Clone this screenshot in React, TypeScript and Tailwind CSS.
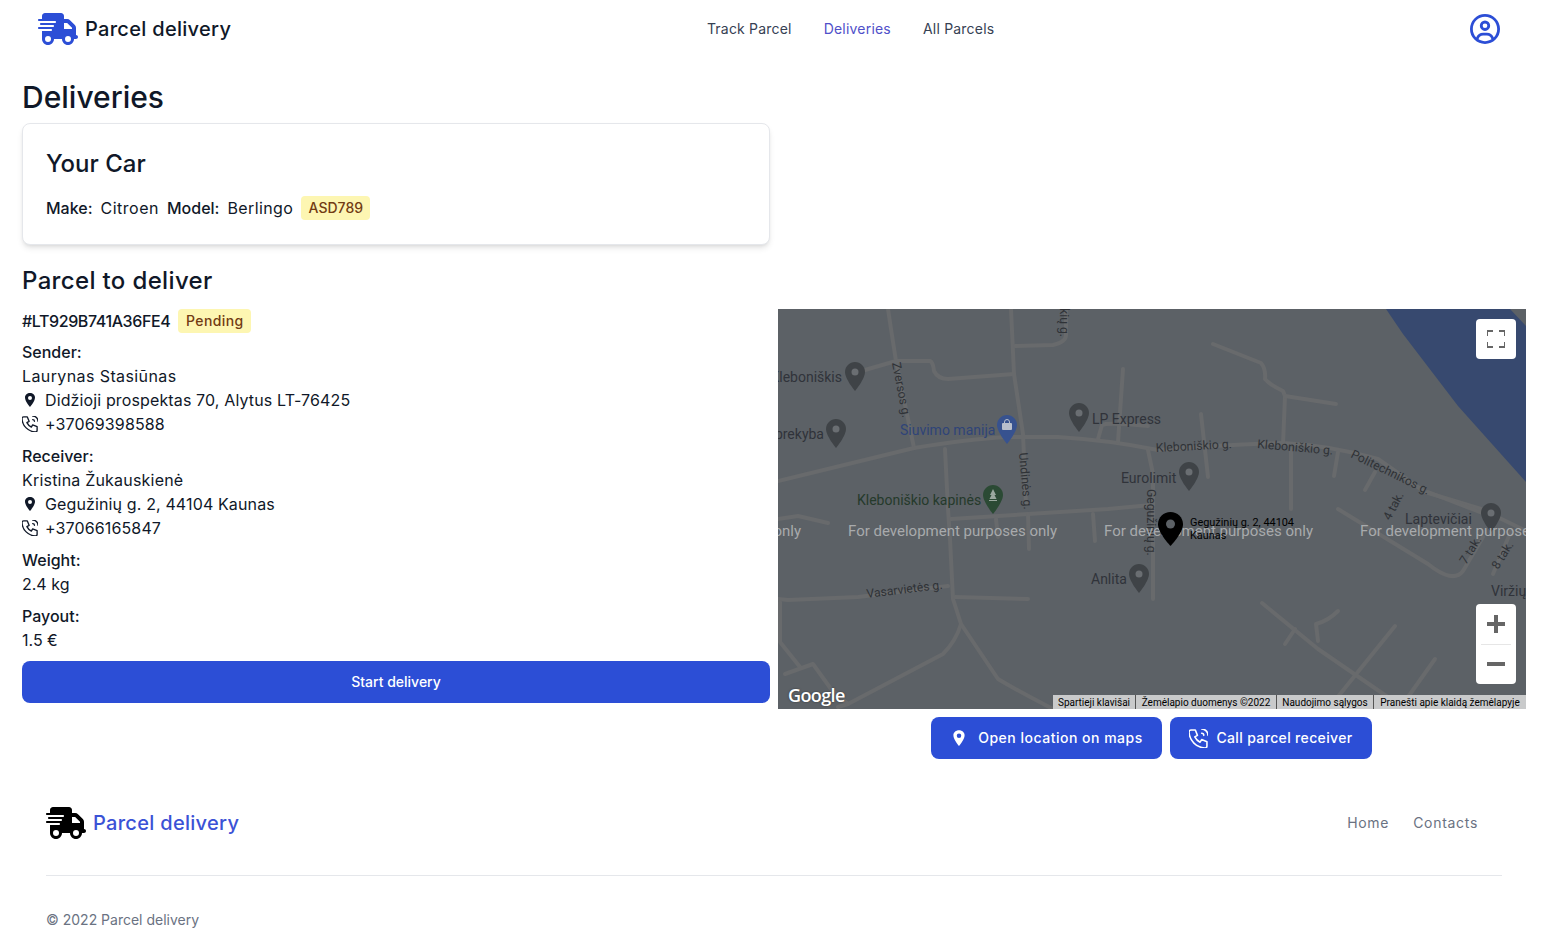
import { FaTruckFast, FaRegCircleUser } from "react-icons/fa6";
import { IoLocationSharp } from "react-icons/io5";

const roads = [
  "M110 0 L113 20 L118 52 L136 139",
  "M80 63 L118 52 L152 52 Q155 53 156 62 Q160 70 170 70 L236 65",
  "M233 0 L236 65 L245 125 L248 195",
  "M237 37 L275 36 Q288 33 288 26 L288 0",
  "M0 172 L136 139 Q190 130 230 128 L280 128 Q330 131 380 141 Q440 136 505 134 Q550 136 600 150 L647 183 L703 200 L748 222",
  "M167 140 L170 200 L172 230 L175 290 L183 315 Q178 332 165 345 L70 395 L60 398",
  "M183 315 L220 370 Q240 382 275 400",
  "M345 60 L340 133",
  "M320 130 L324 116 Q330 113 370 117",
  "M370 141 L375 165 L375 290",
  "M435 35 L483 54 Q488 60 487 70 Q492 76 505 82 L507 87 L505 135",
  "M507 87 L558 95",
  "M423 105 L430 168",
  "M513 140 L513 200",
  "M560 143 L556 167",
  "M597 163 L587 181",
  "M0 210 L20 207 L50 214",
  "M173 210 L330 200 L373 196",
  "M218 210 L220 228",
  "M250 205 L251 240",
  "M315 205 L317 232",
  "M0 290 L10 291 L80 288 L170 277",
  "M177 288 L250 290",
  "M2 293 L2 333 L22 358",
  "M7 365 L35 355 L53 380 L70 395",
  "M484 294 L540 340 L617 393 L625 400",
  "M517 320 L507 335",
  "M540 332 L538 315 Q550 312 560 302",
  "M617 317 L550 400",
  "M657 350 L625 395",
  "M560 200 L650 255 Q675 275 685 262 L705 228",
  "M733 222 L715 265",
  "M650 183 L720 210",
];

const pins = [
  { x: 77, y: 53, fill: "#3f4347" },
  { x: 58, y: 110, fill: "#3f4347" },
  { x: 229, y: 106, fill: "#37528f" },
  { x: 301, y: 94, fill: "#3f4347" },
  { x: 215, y: 176, fill: "#2b4a34" },
  { x: 411, y: 153, fill: "#3f4347" },
  { x: 361, y: 255, fill: "#3f4347" },
  { x: 713, y: 194, fill: "#3f4347" },
];

const places = [
  { text: "Kleboniškis", x: 64, y: 73, anchor: "end", fill: "#30333a" },
  { text: "Parduotuvė prekyba", x: 46, y: 130, anchor: "end", fill: "#30333a" },
  { text: "Siuvimo manija", x: 122, y: 126, anchor: "start", fill: "#2f4478" },
  { text: "LP Express", x: 314, y: 115, anchor: "start", fill: "#30333a" },
  { text: "Kleboniškio kapinės", x: 79, y: 196, anchor: "start", fill: "#253a2b" },
  { text: "Eurolimit", x: 343, y: 174, anchor: "start", fill: "#30333a" },
  { text: "Anlita", x: 313, y: 275, anchor: "start", fill: "#30333a" },
  { text: "Laptevičiai", x: 627, y: 215, anchor: "start", fill: "#30333a" },
  { text: "Viržių", x: 713, y: 287, anchor: "start", fill: "#30333a" },
];

const streets = [
  { text: "Zversos g.", x: 114, y: 54, r: 79 },
  { text: "kių g.", x: 282, y: -1, r: 90 },
  { text: "Undinės g.", x: 241, y: 144, r: 85 },
  { text: "Gegužinių g.", x: 369, y: 180, r: 90 },
  { text: "Kleboniškio g.", x: 378, y: 143, r: -3 },
  { text: "Kleboniškio g.", x: 479, y: 139, r: 5 },
  { text: "Politechnikos g.", x: 572, y: 148, r: 26 },
  { text: "Vasarvietės g.", x: 89, y: 289, r: -7 },
  { text: "4 tak.", x: 612, y: 212, r: -62 },
  { text: "7 tak.", x: 688, y: 256, r: -58 },
  { text: "8 tak.", x: 720, y: 261, r: -58 },
];

function PhoneIcon({ className }: { className: string }) {
  return (
    <svg viewBox="3 3 18 18" fill="none" stroke="currentColor" strokeWidth="1.5" strokeLinecap="round" strokeLinejoin="round" className={className}>
      <path d="M5 4h4l2 5l-2.500 1.500a11 11 0 0 0 5 5l1.500 -2.500l5 2v4a2 2 0 0 1 -2 2a16 16 0 0 1 -15 -15a2 2 0 0 1 2 -2" />
      <path d="M15 7a2 2 0 0 1 2 2" />
      <path d="M15 3a6 6 0 0 1 6 6" />
    </svg>
  );
}

function MapDrawing() {
  return (
    <svg viewBox="0 0 748 400" className="block w-full h-full font-['Roboto',sans-serif]">
      <rect width="748" height="400" fill="#5c6166" />
      <path d="M608 0 L625 25 L680 97 L748 173 L748 17 L732 0 Z" fill="#37496f" />
      <g fill="none" stroke="#686a6c" strokeWidth="4" strokeLinecap="round" strokeLinejoin="round">
        {roads.map((d) => (
          <path key={d} d={d} />
        ))}
      </g>
      {streets.map((s) => (
        <text
          key={s.text + s.x}
          x={s.x}
          y={s.y}
          transform={`rotate(${s.r} ${s.x} ${s.y})`}
          fontSize="12.2"
          fill="#2f3236"
        >
          {s.text}
        </text>
      ))}
      {places.map((p) => (
        <text key={p.text} x={p.x} y={p.y} textAnchor={p.anchor as "start" | "end"} fontSize="14" fill={p.fill}>
          {p.text}
        </text>
      ))}
      {pins.map((p) => (
        <g key={p.x} transform={`translate(${p.x - 10} ${p.y})`}>
          <path d="M10 0C4.500 0 0 4.500 0 10c0 7 10 19 10 19s10-12 10-19C20 4.500 15.500 0 10 0z" fill={p.fill} />
          {p.fill === "#3f4347" && <circle cx="10" cy="10" r="3.500" fill="#6a6e72" />}
          {/* shop bag */}
          {p.fill === "#37528f" && (
            <g>
              <rect x="5" y="8" width="10" height="7" rx="1" fill="#b9bfcc" />
              <path d="M7.500 8V7a2.500 2.500 0 0 1 5 0v1" fill="none" stroke="#b9bfcc" strokeWidth="1" />
            </g>
          )}
          {/* cemetery tree */}
          {p.fill === "#2b4a34" && <path d="M10 4L13 10H11.500L13.500 14H6.500L8.500 10H7zM6 15h8v1H6z" fill="#9aa89e" />}
        </g>
      ))}
      {[-186, 70, 326, 582].map((x) => (
        <text key={x} x={x} y="227" fontSize="15" fill="#a8aaac">
          For development purposes only
        </text>
      ))}
      <g transform="translate(380 203)">
        <path d="M12.500 0C5.600 0 0 5.400 0 12.300c0 9 12.500 21.700 12.500 21.700S25 21.300 25 12.300C25 5.400 19.400 0 12.500 0z" fill="#000" />
        <circle cx="12.500" cy="12" r="4.500" fill="#5c6166" />
      </g>
      <text x="412" y="217" fontSize="10.900" fill="#000">Gegužinių g. 2, 44104</text>
      <text x="412" y="230" fontSize="10.900" fill="#000">Kaunas</text>
    </svg>
  );
}

function ContactLine({ icon, text }: { icon: "pin" | "phone"; text: string }) {
  return (
    <div className="flex items-center h-6 gap-[7px]">
      <span className="w-4 flex justify-center">
        {icon === "pin" ? <IoLocationSharp size={16} /> : <PhoneIcon className="w-4 h-4" />}
      </span>
      <span>{text}</span>
    </div>
  );
}

function Logo({ iconClass, textClass }: { iconClass: string; textClass: string }) {
  return (
    <div className="flex items-center gap-[7px]">
      <FaTruckFast size={40} className={iconClass} />
      <span className={`text-xl font-medium tracking-[0.3px] ${textClass}`}>Parcel delivery</span>
    </div>
  );
}

export default function App() {
  return (
    <div className="h-screen overflow-hidden bg-white text-gray-900 font-['Inter',sans-serif]">
      {/* Header */}
      <header className="h-[58px] flex items-center justify-between pl-[38px] pr-[44px]">
        <Logo iconClass="text-[#2c4ed6]" textClass="text-gray-900" />
        <nav className="flex gap-8 text-sm tracking-[0.2px] text-gray-700">
          <a>Track Parcel</a>
          <a className="text-[#4f50c9]">Deliveries</a>
          <a>All Parcels</a>
        </nav>
        <FaRegCircleUser size={30} className="text-[#2c4ed6]" />
      </header>

      <main className="pl-[22px] pr-[18px]">
        <h1 className="mt-[21px] mb-2 text-3xl font-medium">Deliveries</h1>

        <div className="grid grid-cols-2 gap-2">
          <div className="bg-white border border-gray-200 rounded-lg shadow-md py-6 pl-[23px] pr-6">
            <h2 className="text-2xl font-medium">Your Car</h2>
            <div className="mt-4 flex items-center gap-2 h-6">
              <span className="font-medium">Make:</span>
              <span className="tracking-[0.5px]">Citroen</span>
              <span className="font-medium">Model:</span>
              <span className="tracking-[0.4px]">Berlingo</span>
              <span className="h-6 w-[69px] flex items-center justify-center rounded bg-[#fdf6b2] text-[#723b13] text-sm font-medium">ASD789</span>
            </div>
          </div>
        </div>

        <h2 className="mt-5 mb-3 text-2xl font-medium tracking-[0.35px]">Parcel to deliver</h2>

        <div className="grid grid-cols-2 gap-2">
          {/* Parcel info */}
          <div className="tracking-[0.13px]">
            <div className="flex items-center gap-2 h-6">
              <span className="font-medium tracking-[-0.4px]">#LT929B741A36FE4</span>
              <span className="h-6 w-[73px] flex items-center justify-center rounded bg-[#fdf6b2] text-[#723b13] text-sm font-medium tracking-[0.4px]">Pending</span>
            </div>
            <div className="mt-[7px]">
              <div className="h-6 leading-6 font-medium tracking-normal">Sender:</div>
              <div className="h-6 leading-6 tracking-[0.4px]">Laurynas Stasiūnas</div>
              <ContactLine icon="pin" text="Didžioji prospektas 70, Alytus LT-76425" />
              <ContactLine icon="phone" text="+37069398588" />
            </div>
            <div className="mt-2">
              <div className="h-6 leading-6 font-medium tracking-normal">Receiver:</div>
              <div className="h-6 leading-6 tracking-[0.2px]">Kristina Žukauskienė</div>
              <ContactLine icon="pin" text="Gegužinių g. 2, 44104 Kaunas" />
              <ContactLine icon="phone" text="+37066165847" />
            </div>
            <div className="mt-2">
              <div className="h-6 leading-6 font-medium tracking-normal">Weight:</div>
              <div className="h-6 leading-6 tracking-normal">2.4 kg</div>
            </div>
            <div className="mt-2">
              <div className="h-6 leading-6 font-medium tracking-normal">Payout:</div>
              <div className="h-6 leading-6 tracking-normal">1.5 €</div>
            </div>
            <button className="mt-[9px] w-full h-[42px] rounded-lg bg-[#2c4ed6] text-white text-sm font-medium tracking-normal">
              Start delivery
            </button>
          </div>

          {/* Map */}
          <div>
            <div className="relative h-[400px] overflow-hidden">
              <MapDrawing />

              <div className="absolute top-[10px] right-[10px] w-10 h-10 bg-white rounded-sm flex items-center justify-center">
                <svg viewBox="0 0 18 18" className="w-[18px] h-[18px]" fill="none" stroke="#666" strokeWidth="2">
                  <path d="M0 6V1h6M12 1h6v5M18 12v5h-6M6 17H0v-5" />
                </svg>
              </div>

              <div className="absolute top-[295px] right-[10px] w-10 h-20 bg-white rounded-sm flex flex-col items-center">
                <div className="h-10 flex items-center justify-center">
                  <svg viewBox="0 0 18 18" className="w-[18px] h-[18px]" fill="#666">
                    <path d="M7 0h4v7h7v4h-7v7H7v-7H0V7h7z" />
                  </svg>
                </div>
                <div className="w-[30px] h-px bg-[#e6e6e6]" />
                <div className="h-10 flex items-center justify-center">
                  <svg viewBox="0 0 18 18" className="w-[18px] h-[18px]" fill="#666">
                    <path d="M0 7h18v4H0z" />
                  </svg>
                </div>
              </div>

              <span className="absolute left-[10px] bottom-0 text-white text-lg font-semibold tracking-[-0.6px] font-['Open_Sans',sans-serif] [text-shadow:0_0_2px_#333]">
                Google
              </span>

              <div className="absolute right-0 bottom-0 h-[14px] flex items-center bg-[#c9cacb] text-black text-[10px] whitespace-nowrap font-['Roboto',sans-serif]">
                <span className="w-[83px] text-center border-r border-[#555]">Spartieji klavišai</span>
                <span className="w-[141px] text-center border-r border-[#555]">Žemėlapio duomenys ©2022</span>
                <span className="w-[97px] text-center border-r border-[#555]">Naudojimo sąlygos</span>
                <span className="w-[152px] text-center">Pranešti apie klaidą žemėlapyje</span>
              </div>
            </div>

            <div className="mt-2 flex justify-center gap-2 pr-px">
              <button className="h-[42px] w-[231px] rounded-lg bg-[#2c4ed6] text-white text-sm font-medium tracking-[0.5px] flex items-center justify-center gap-[10px]">
                <IoLocationSharp size={18} />
                Open location on maps
              </button>
              <button className="h-[42px] w-[202px] rounded-lg bg-[#2c4ed6] text-white text-sm font-medium tracking-[0.35px] flex items-center justify-center gap-2">
                <PhoneIcon className="w-[19px] h-[19px]" />
                Call parcel receiver
              </button>
            </div>
          </div>
        </div>
      </main>

      {/* Footer */}
      <footer className="mt-12 mx-[46px] w-[1456px]">
        <div className="flex items-center justify-between h-8 pr-6">
          <Logo iconClass="text-black" textClass="text-[#3b52d6]" />
          <div className="flex gap-6 text-sm tracking-[0.7px] text-gray-500">
            <a>Home</a>
            <a>Contacts</a>
          </div>
        </div>
        <div className="mt-9 h-px bg-gray-200" />
        <p className="mt-[34px] text-sm text-gray-500">© 2022 Parcel delivery</p>
      </footer>
    </div>
  );
}
